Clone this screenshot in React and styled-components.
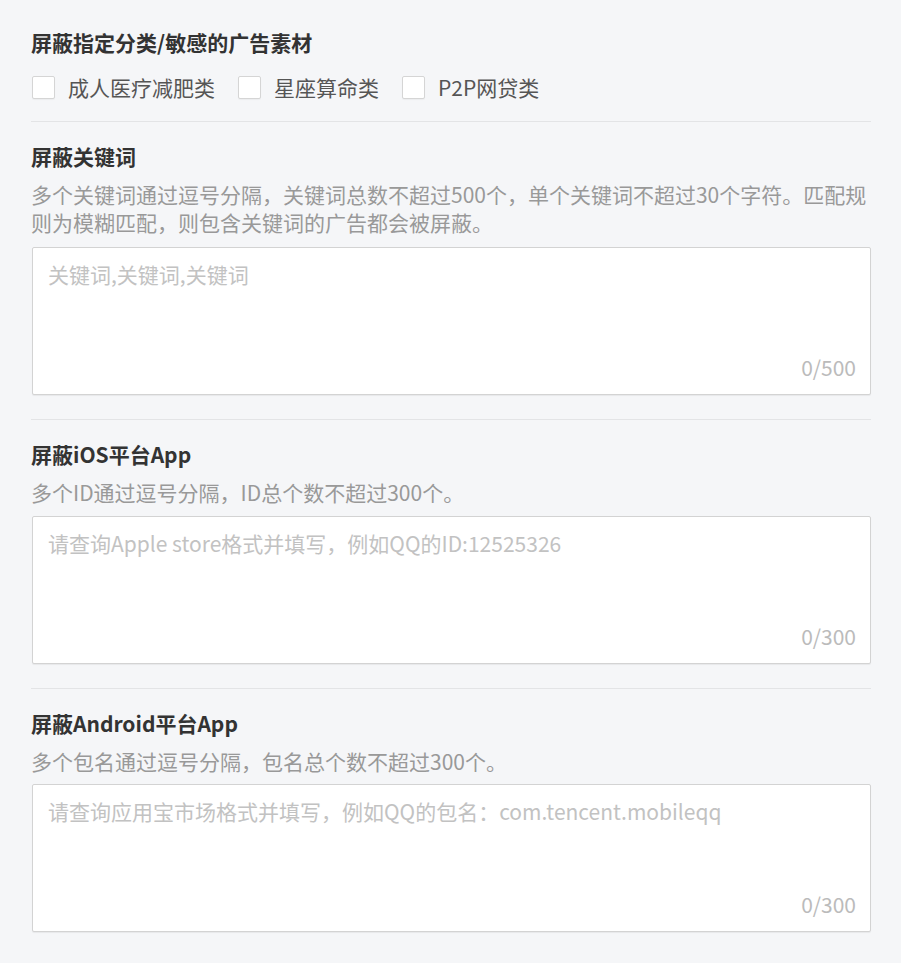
import React from "react";
import styled, { createGlobalStyle } from "styled-components";

const GlobalStyle = createGlobalStyle`
  html, body { margin: 0; padding: 0; background: #f5f6f8; }
  body { font-family: "Noto Sans CJK SC", "Noto Sans", sans-serif; }
  * { box-sizing: border-box; }
`;

const Page = styled.div`
  padding: 28px 30px 30px 31px;
  width: 901px;
`;

const Section = styled.section`
  display: flex;
  flex-direction: column;
`;

const Divider = styled.hr`
  border: none;
  height: 1px;
  background: #e3e4e6;
  margin: ${(p) => p.$top}px 0 20px;
`;

const Title = styled.h3`
  margin: 0;
  font-size: 21px;
  line-height: 28px;
  font-weight: 700;
  color: #333333;
`;

const Desc = styled.p`
  margin: 10px 0 0;
  font-size: 21px;
  line-height: 28px;
  color: #999999;
`;

const CheckRow = styled.div`
  display: flex;
  align-items: center;
  gap: 22px;
  margin-top: 17px;
  height: 28px;
`;

const CheckItem = styled.label`
  display: flex;
  align-items: center;
  gap: 13px;
  font-size: 21px;
  line-height: 28px;
  color: #555555;
  cursor: pointer;
`;

const Check = styled.input.attrs({ type: "checkbox" })`
  appearance: none;
  margin: 0 0 0 1px;
  width: 23px;
  height: 23px;
  border: 1px solid #d5d5d5;
  border-radius: 2px;
  background: #ffffff;
  box-shadow: 0 1px 1px rgba(0, 0, 0, 0.04);
`;

const Box = styled.div`
  display: flex;
  flex-direction: column;
  height: 148px;
  margin: ${(p) => p.$gap}px 0 0 1px;
  background: #ffffff;
  border: 1px solid #d3d3d3;
  border-radius: 2px;
  box-shadow: 0 1px 1px rgba(0, 0, 0, 0.06);
`;

const Area = styled.textarea`
  flex: 1;
  border: none;
  outline: none;
  resize: none;
  background: transparent;
  padding: 12px 15px 0;
  font-family: "Noto Sans CJK SC", "Noto Sans", sans-serif;
  font-size: 21px;
  line-height: 28px;
  color: #333;
  &::placeholder { color: #c2c2c2; }
`;

const Counter = styled.span`
  align-self: flex-end;
  padding: 0 14px 13px 0;
  font-size: 21px;
  line-height: 28px;
  color: #bbbbbb;
`;

function Field({ placeholder, max, gap = 11 }) {
  return (
    <Box $gap={gap}>
      <Area placeholder={placeholder} />
      <Counter>0/{max}</Counter>
    </Box>
  );
}

export default function App() {
  return (
    <>
      <GlobalStyle />
      <Page>
        <Section>
          <Title>屏蔽指定分类/敏感的广告素材</Title>
          <CheckRow>
            <CheckItem><Check />成人医疗减肥类</CheckItem>
            <CheckItem><Check />星座算命类</CheckItem>
            <CheckItem><Check />P2P网贷类</CheckItem>
          </CheckRow>
        </Section>
        <Divider $top={20} />
        <Section>
          <Title>屏蔽关键词</Title>
          <Desc>
            多个关键词通过逗号分隔，关键词总数不超过500个，单个关键词不超过30个字符。匹配规则为模糊匹配，则包含关键词的广告都会被屏蔽。
          </Desc>
          <Field placeholder="关键词,关键词,关键词" max={500} />
        </Section>
        <Divider $top={24} />
        <Section>
          <Title>屏蔽iOS平台App</Title>
          <Desc>多个ID通过逗号分隔，ID总个数不超过300个。</Desc>
          <Field placeholder="请查询Apple store格式并填写，例如QQ的ID:12525326" max={300} gap={10} />
        </Section>
        <Divider $top={24} />
        <Section>
          <Title>屏蔽Android平台App</Title>
          <Desc>多个包名通过逗号分隔，包名总个数不超过300个。</Desc>
          <Field placeholder="请查询应用宝市场格式并填写，例如QQ的包名：com.tencent.mobileqq" max={300} gap={9} />
        </Section>
      </Page>
    </>
  );
}
